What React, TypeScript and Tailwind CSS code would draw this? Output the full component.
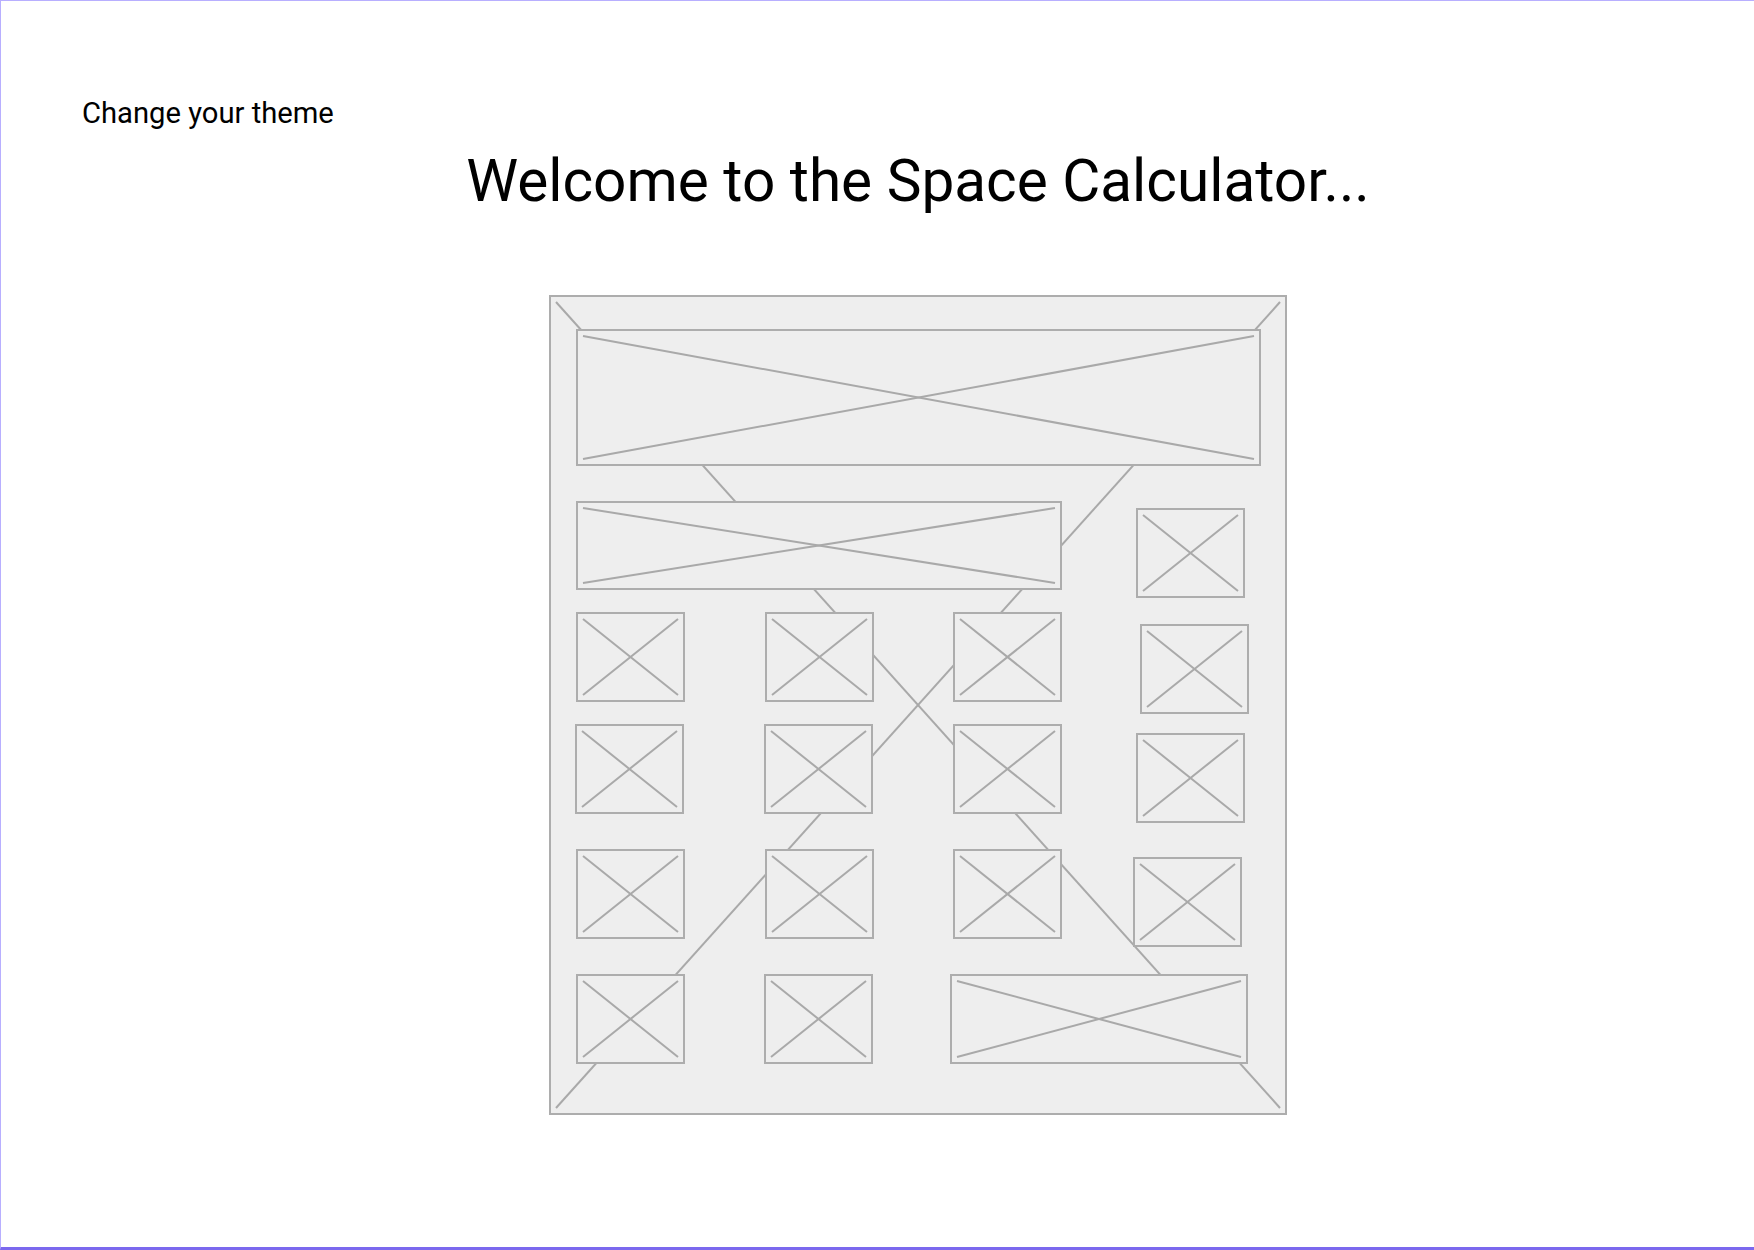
import React from "react";

function Placeholder({ className = "", children }: { className?: string; children?: React.ReactNode }) {
  return (
    <div className={`relative border-2 border-[#adadad] bg-[#eeeeee] ${className}`}>
      <svg className="absolute inset-[5px] h-[calc(100%-10px)] w-[calc(100%-10px)] overflow-visible" aria-hidden="true">
        <line x1="0" y1="0" x2="100%" y2="100%" stroke="#a9a9a9" strokeWidth="2" />
        <line x1="100%" y1="0" x2="0" y2="100%" stroke="#a9a9a9" strokeWidth="2" />
      </svg>
      {children}
    </div>
  );
}

function Small({ className = "" }: { className?: string }) {
  return <Placeholder className={`h-[90px] w-[109px] shrink-0 ${className}`} />;
}

export default function App() {
  return (
    <div
      className="h-[1250px] w-[1754px] overflow-hidden border-t border-l border-b-[3px] border-t-[#b8afff] border-l-[#b8afff] border-b-[#7b68ee] bg-white text-black"
      style={{ fontFamily: "Roboto, 'Noto Sans', sans-serif" }}
    >
      <div className="pl-[81px] pt-[94px]">
        <p className="text-[29.2px] leading-[36px]">Change your theme</p>
      </div>
      <div className="flex flex-col items-center pl-[81px]">
        <h1 className="mt-[17px] text-[58.5px] font-normal leading-[66px]">Welcome to the Space Calculator...</h1>
        <Placeholder className="mt-[81px] h-[820px] w-[738px]">
          <div className="relative flex flex-col pl-[25px] pt-[32px]">
            <Placeholder className="h-[137px] w-[685px]" />
            <div className="mt-[35px] flex">
              <div className="flex w-[486px] flex-col">
                <Placeholder className="h-[89px] w-[486px]" />
                <div className="mt-[22px] flex justify-between">
                  <Small />
                  <Small />
                  <Small />
                </div>
                <div className="mt-[22px] flex justify-between">
                  <Small className="-ml-[1px]" />
                  <Small />
                  <Small />
                </div>
                <div className="mt-[35px] flex justify-between">
                  <Small />
                  <Small />
                  <Small />
                </div>
              </div>
              <div className="flex flex-col">
                <Small className="ml-[74px] mt-[7px]" />
                <Small className="ml-[78px] mt-[26px]" />
                <Small className="ml-[74px] mt-[19px]" />
                <Small className="ml-[71px] mt-[34px]" />
              </div>
            </div>
            <div className="mt-[27px] flex">
              <Small />
              <Small className="ml-[79px]" />
              <Placeholder className="ml-[77px] h-[90px] w-[298px]" />
            </div>
          </div>
        </Placeholder>
      </div>
    </div>
  );
}
